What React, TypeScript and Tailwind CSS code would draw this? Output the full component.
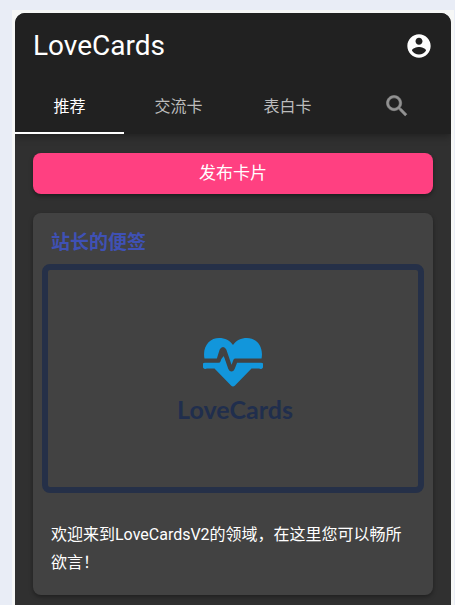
const tabs = ['推荐', '交流卡', '表白卡'];

function AccountIcon() {
  return (
    <svg viewBox="0 0 24 24" className="size-7 fill-white" aria-hidden="true">
      <path d="M12 2C6.48 2 2 6.48 2 12s4.48 10 10 10 10-4.48 10-10S17.52 2 12 2zm0 3c1.66 0 3 1.34 3 3s-1.34 3-3 3-3-1.34-3-3 1.34-3 3-3zm0 14.2c-2.5 0-4.71-1.28-6-3.22.03-1.99 4-3.08 6-3.08 1.99 0 5.97 1.09 6 3.08-1.29 1.94-3.5 3.22-6 3.22z" />
    </svg>
  );
}

function SearchIcon() {
  return (
    <svg viewBox="0 0 24 24" className="size-7 fill-[#929292]" aria-hidden="true">
      <path
        className="stroke-[#929292] stroke-[0.5]"
        d="M15.5 14h-.79l-.28-.27C15.41 12.59 16 11.11 16 9.5 16 5.91 13.09 3 9.5 3S3 5.91 3 9.5 5.91 16 9.5 16c1.61 0 3.09-.59 4.23-1.57l.27.28v.79l5 4.99L20.49 19l-4.99-5zm-6 0C7.01 14 5 11.99 5 9.5S7.01 5 9.5 5 14 7.01 14 9.5 11.99 14 9.5 14z"
      />
    </svg>
  );
}

function HeartLogo() {
  return (
    <svg viewBox="0 0 60 50" className="h-[50px] w-[60px]" aria-hidden="true">
      <path
        fill="#1296db"
        d="M1.5 22 C-1 9 7 1 16 1 C22 1 27 3.500 30 8 C33 3.500 38 1 44 1 C53 1 61 9 58.500 22 V25.500 A3.200 3.200 0 0 1 56 31.600 H48.500 L32 48.500 Q30 50.300 28 48.500 L11.500 31.600 H4 A3.200 3.200 0 0 1 1.500 25.500 Z"
      />
      <path
        fill="none"
        stroke="#424242"
        strokeWidth="4.4"
        strokeLinejoin="round"
        d="M0 23.600 H15.500 L18.700 13.500 Q20 10.800 21.300 13.500 L27.300 31 Q28.500 33.500 29.700 31 L32.500 23.600 H60"
      />
      <path fill="#424242" d="M16 24 L20 12 L23 18 L29 32 L26 31 L21 19 Z" />
    </svg>
  );
}

export default function App() {
  return (
    <div className="h-screen overflow-hidden bg-[#e9edf6] pt-[10px] pr-px pl-3 font-[Roboto,'Noto_Sans_CJK_SC',sans-serif]">
      <div className="h-full bg-[#f6f7f6] pt-[3px] pr-[3px] pl-[3px]">
        <div className="h-full overflow-hidden rounded-t-[10px] bg-[#303030] text-white">
          <header className="bg-[#212121] shadow-[0_2px_8px_rgba(0,0,0,0.35)]">
            <div className="flex h-16 items-center justify-between px-[18px] pt-[2px]">
              <h1 className="text-[28px] leading-8">LoveCards</h1>
              <button type="button" aria-label="账号">
                <AccountIcon />
              </button>
            </div>
            <nav className="grid h-[57px] grid-cols-4">
              {tabs.map((tab, i) => (
                <button
                  key={tab}
                  type="button"
                  className={
                    i === 0
                      ? 'border-b-2 border-white pt-1 text-base text-white'
                      : 'border-b-2 border-transparent pt-1 text-base text-[#bcbcbc]'
                  }
                >
                  {tab}
                </button>
              ))}
              <button type="button" aria-label="搜索" className="flex items-center justify-center">
                <SearchIcon />
              </button>
            </nav>
          </header>
          <main className="px-[18px] pt-[19px]">
            <button
              type="button"
              className="h-[41px] w-full rounded-lg bg-[#ff4081] text-[17px] shadow-[0_2px_4px_rgba(0,0,0,0.4)]"
            >
              发布卡片
            </button>
            <article className="mt-[19px] rounded-lg bg-[#424242] px-[9px] pt-4 pb-[18px] shadow-[0_2px_4px_rgba(0,0,0,0.35)]">
              <h2 className="px-[9px] text-[19px] leading-7 font-bold text-[#3f51b5]">站长的便签</h2>
              <div className="mt-[7px] flex h-[229px] flex-col items-center rounded-lg border-6 border-[#253048] pt-[67px]">
                <HeartLogo />
                <span className="mt-[6px] pl-1 font-[Lato,sans-serif] text-[25px] leading-8 font-bold text-[#202e4d]">LoveCards</span>
              </div>
              <p className="mt-7 px-[9px] text-base leading-7">
                欢迎来到LoveCardsV2的领域，在这里您可以畅所欲言！
              </p>
            </article>
          </main>
        </div>
      </div>
    </div>
  );
}
